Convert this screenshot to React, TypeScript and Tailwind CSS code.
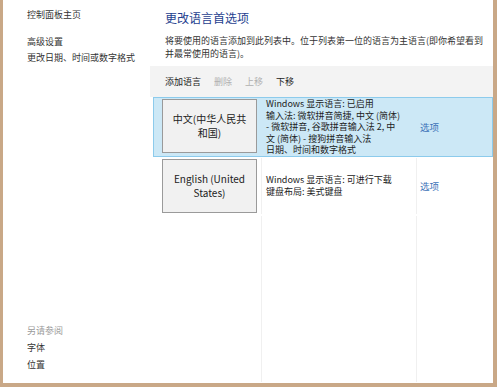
import React from "react";

const font = { fontFamily: '"Noto Sans CJK SC", "Noto Sans", sans-serif' };

function LangRow({
  name,
  lines,
  selected,
}: {
  name: string[];
  lines: string[];
  selected?: boolean;
}) {
  return (
    <div
      className={
        "grid grid-cols-[108px_155px_1fr] border " +
        (selected ? "bg-[#cce8f6] border-[#8ccbec]" : "border-transparent")
      }
    >
      <div className={"pl-[8px] py-[1px] " + (selected ? "" : "border-r border-[#f0f0f0]")}>
        <div className="w-[95px] h-[54px] flex flex-col items-center justify-center bg-[#f1f1f1] border border-[#9a9a9a] text-[10px] leading-[14px] text-[#222]">
          {name.map((n) => (
            <span key={n}>{n}</span>
          ))}
        </div>
      </div>
      <div
        className={
          "pl-[4px] flex flex-col justify-center text-[9px] leading-[11.6px] text-[#222] " +
          (selected ? "" : "border-r border-[#f0f0f0]")
        }
      >
        {lines.map((l) => (
          <span key={l}>{l}</span>
        ))}
      </div>
      <div className="pl-[3px] flex items-center text-[9.5px] text-[#3d72b8]">选项</div>
    </div>
  );
}

export default function App() {
  return (
    <div className="w-[500px] h-[391px] bg-white overflow-hidden" style={font}>
      <div className="w-[497px] h-[387px] flex border-l-[3px] border-r-[4px] border-b-[4px] border-[#c9a887]">
        {/* Sidebar */}
        <div className="w-[147px] flex flex-col pl-[24px] pt-[8px] pb-[11px] text-[9px] text-[#333]">
          <span className="leading-[14px]">控制面板主页</span>
          <span className="leading-[14px] mt-[13px]">高级设置</span>
          <span className="leading-[14px] mt-[2px]">更改日期、时间或数字格式</span>
          <div className="flex-1" />
          <span className="leading-[14px] text-[#9a9a9a]">另请参阅</span>
          <span className="leading-[14px] mt-[3px]">字体</span>
          <span className="leading-[14px] mt-[3px]">位置</span>
        </div>

        {/* Main */}
        <div className="flex-1 flex flex-col">
          <div className="pl-[15px] pt-[9px]">
            <h1 className="text-[12px] leading-[17px] text-[#1f3f8f]">更改语言首选项</h1>
            <p className="mt-[8px] text-[9px] leading-[13px] text-[#333] pr-[8px]">
              将要使用的语言添加到此列表中。位于列表第一位的语言为主语言(即你希望看到并最常使用的语言)。
            </p>
          </div>
          <div className="mt-[6px] h-[31px] bg-[#f3f3f3] flex items-center gap-[13px] pl-[15px] text-[9px]">
            <span className="text-[#222]">添加语言</span>
            <span className="text-[#b0b0b0]">删除</span>
            <span className="text-[#b0b0b0]">上移</span>
            <span className="text-[#222]">下移</span>
          </div>
          <div className="flex-1 flex flex-col pl-[3px]">
            <LangRow
              selected
              name={["中文(中华人民共", "和国)"]}
              lines={[
                "Windows 显示语言: 已启用",
                "输入法: 微软拼音简捷, 中文 (简体)",
                "- 微软拼音, 谷歌拼音输入法 2, 中",
                "文 (简体) - 搜狗拼音输入法",
                "日期、时间和数字格式",
              ]}
            />
            <LangRow
              name={["English (United", "States)"]}
              lines={["Windows 显示语言: 可进行下载", "键盘布局: 美式键盘"]}
            />
            <div className="flex-1 grid grid-cols-[108px_155px_1fr] border border-transparent">
              <div className="border-r border-[#f0f0f0]" />
              <div className="border-r border-[#f0f0f0]" />
              <div />
            </div>
          </div>
        </div>
      </div>
    </div>
  );
}
